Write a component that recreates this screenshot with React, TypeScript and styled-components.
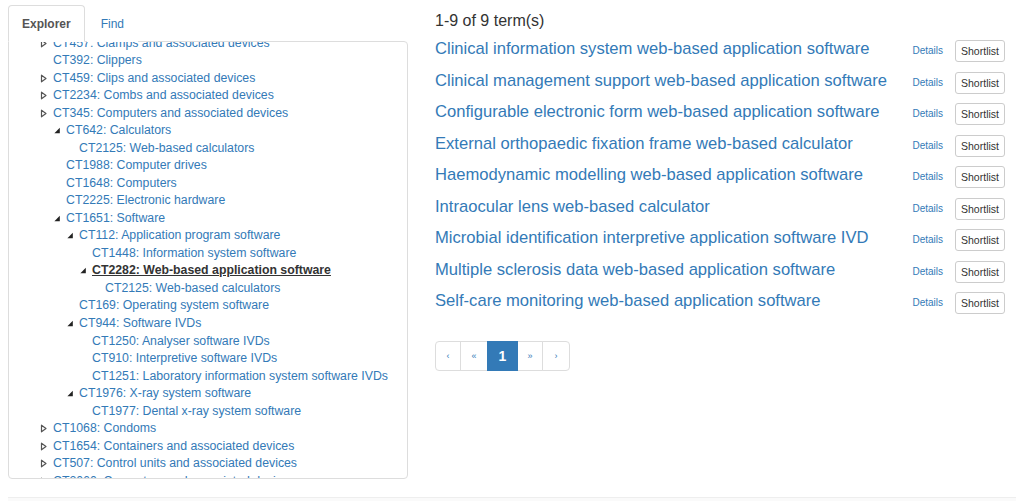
import React from "react";
import styled, { createGlobalStyle } from "styled-components";

const GlobalStyle = createGlobalStyle`
  html, body { margin: 0; padding: 0; background: #fff; }
  body { font-family: "Liberation Sans", Arial, sans-serif; color: #333; }
  * { box-sizing: border-box; }
`;

type NodeState = "closed" | "open" | "leaf";
interface TreeNode {
  level: number;
  label: string;
  state: NodeState;
  selected?: boolean;
}

const tree: TreeNode[] = [
  { level: 0, label: "CT457: Clamps and associated devices", state: "closed" },
  { level: 0, label: "CT392: Clippers", state: "leaf" },
  { level: 0, label: "CT459: Clips and associated devices", state: "closed" },
  { level: 0, label: "CT2234: Combs and associated devices", state: "closed" },
  { level: 0, label: "CT345: Computers and associated devices", state: "closed" },
  { level: 1, label: "CT642: Calculators", state: "open" },
  { level: 2, label: "CT2125: Web-based calculators", state: "leaf" },
  { level: 1, label: "CT1988: Computer drives", state: "leaf" },
  { level: 1, label: "CT1648: Computers", state: "leaf" },
  { level: 1, label: "CT2225: Electronic hardware", state: "leaf" },
  { level: 1, label: "CT1651: Software", state: "open" },
  { level: 2, label: "CT112: Application program software", state: "open" },
  { level: 3, label: "CT1448: Information system software", state: "leaf" },
  { level: 3, label: "CT2282: Web-based application software", state: "open", selected: true },
  { level: 4, label: "CT2125: Web-based calculators", state: "leaf" },
  { level: 2, label: "CT169: Operating system software", state: "leaf" },
  { level: 2, label: "CT944: Software IVDs", state: "open" },
  { level: 3, label: "CT1250: Analyser software IVDs", state: "leaf" },
  { level: 3, label: "CT910: Interpretive software IVDs", state: "leaf" },
  { level: 3, label: "CT1251: Laboratory information system software IVDs", state: "leaf" },
  { level: 2, label: "CT1976: X-ray system software", state: "open" },
  { level: 3, label: "CT1977: Dental x-ray system software", state: "leaf" },
  { level: 0, label: "CT1068: Condoms", state: "closed" },
  { level: 0, label: "CT1654: Containers and associated devices", state: "closed" },
  { level: 0, label: "CT507: Control units and associated devices", state: "closed" },
  { level: 0, label: "CT2060: Converters and associated devices", state: "closed" },
];

const results = [
  "Clinical information system web-based application software",
  "Clinical management support web-based application software",
  "Configurable electronic form web-based application software",
  "External orthopaedic fixation frame web-based calculator",
  "Haemodynamic modelling web-based application software",
  "Intraocular lens web-based calculator",
  "Microbial identification interpretive application software IVD",
  "Multiple sclerosis data web-based application software",
  "Self-care monitoring web-based application software",
];

const Page = styled.div`
  display: flex;
  flex-direction: column;
  min-height: 501px;
`;

const Main = styled.div`
  display: flex;
  padding: 5px 19px 0 8px;
  gap: 27px;
`;

const LeftCol = styled.div`
  width: 400px;
  flex: none;
  display: flex;
  flex-direction: column;
`;

const Tabs = styled.div`
  display: flex;
  height: 37px;
  position: relative;
  z-index: 1;
`;

const Tab = styled.div<{ $active?: boolean }>`
  height: 37px;
  padding: 0 13px;
  display: flex;
  align-items: center;
  font-size: 12px;
  font-weight: ${(p) => (p.$active ? 700 : 400)};
  color: ${(p) => (p.$active ? "#555" : "#337ab7")};
  background: #fff;
  border: 1px solid ${(p) => (p.$active ? "#ddd" : "transparent")};
  border-bottom-color: ${(p) => (p.$active ? "#fff" : "transparent")};
  border-radius: 4px 4px 0 0;
  margin-bottom: -1px;
  margin-right: 2px;
`;

const TreePanel = styled.div`
  height: 438px;
  border: 1px solid #ddd;
  border-radius: 0 4px 4px 4px;
  overflow: hidden;
  margin-top: -1px;
`;

const TreeList = styled.ul`
  list-style: none;
  margin: -7.5px 0 0 0;
  padding: 0 0 0 31px;
`;

const TreeRow = styled.li<{ $level: number }>`
  display: flex;
  align-items: center;
  height: 17.53px;
  padding-left: ${(p) => p.$level * 13}px;
  white-space: nowrap;
`;

const IconCell = styled.span`
  width: 13px;
  height: 17px;
  flex: none;
  display: flex;
  align-items: center;
`;

const TreeLink = styled.a<{ $selected?: boolean }>`
  font-size: 12.3px;
  line-height: 17px;
  color: ${(p) => (p.$selected ? "#333" : "#337ab7")};
  font-weight: ${(p) => (p.$selected ? 700 : 400)};
  text-decoration: ${(p) => (p.$selected ? "underline" : "none")};
  cursor: pointer;
`;

const RightCol = styled.div`
  flex: 1;
  display: flex;
  flex-direction: column;
`;

const Count = styled.div`
  font-size: 16px;
  line-height: 20px;
  color: #333;
  margin-top: 6px;
  margin-bottom: 7px;
`;

const ResultRow = styled.div`
  display: flex;
  align-items: flex-start;
  height: 31.5px;
`;

const ResultTitle = styled.a`
  flex: 1;
  font-size: 16.6px;
  line-height: 21px;
  color: #337ab7;
  text-decoration: none;
  cursor: pointer;
`;

const DetailsLink = styled.a`
  font-size: 10px;
  color: #337ab7;
  margin-top: 7px;
  margin-right: 12px;
  cursor: pointer;
`;

const ShortlistButton = styled.button`
  margin-top: 2px;
  height: 22px;
  width: 50px;
  padding: 0;
  font-family: "Liberation Sans", Arial, sans-serif;
  font-size: 10.5px;
  color: #333;
  background: #fff;
  border: 1px solid #ccc;
  border-radius: 3px;
`;

const Pager = styled.ul`
  list-style: none;
  display: flex;
  margin: 19.5px 0 0 0;
  padding: 0;
`;

const PageItem = styled.li<{ $w: number; $active?: boolean }>`
  width: ${(p) => p.$w}px;
  height: 30px;
  display: flex;
  align-items: center;
  justify-content: center;
  margin-left: -1px;
  border: 1px solid ${(p) => (p.$active ? "#337ab7" : "#ddd")};
  background: ${(p) => (p.$active ? "#337ab7" : "#fff")};
  color: ${(p) => (p.$active ? "#fff" : "#337ab7")};
  font-size: ${(p) => (p.$active ? "14px" : "9px")};
  font-weight: ${(p) => (p.$active ? 700 : 400)};
  position: relative;
  z-index: ${(p) => (p.$active ? 2 : 1)};
  &:first-child {
    margin-left: 0;
    border-radius: 4px 0 0 4px;
  }
  &:last-child {
    border-radius: 0 4px 4px 0;
  }
`;

const Footer = styled.div`
  margin: auto 8px 0 8px;
  height: 4px;
  border-top: 1px solid #eee;
  background: #fafafa;
`;

const Spacer = styled.div`
  height: 14px;
`;

function TreeIcon({ state }: { state: NodeState }) {
  if (state === "closed") {
    return (
      <svg width="13" height="17" viewBox="0 0 13 17">
        <path d="M1.5 5.2 L6 8.5 L1.5 11.8 Z" fill="none" stroke="#555" strokeWidth="1.2" strokeLinejoin="round" />
      </svg>
    );
  }
  if (state === "open") {
    return (
      <svg width="13" height="17" viewBox="0 0 13 17">
        <path d="M6.8 5.8 L6.8 11.2 L1.4 11.2 Z" fill="#222" />
      </svg>
    );
  }
  return null;
}

export default function App() {
  const pages = [
    { label: "‹", w: 26 },
    { label: "«", w: 28 },
    { label: "1", w: 31, active: true },
    { label: "»", w: 26 },
    { label: "›", w: 28 },
  ];
  return (
    <>
      <GlobalStyle />
      <Page>
        <Main>
          <LeftCol>
            <Tabs>
              <Tab $active>Explorer</Tab>
              <Tab>Find</Tab>
            </Tabs>
            <TreePanel>
              <TreeList>
                {tree.map((n, i) => (
                  <TreeRow key={i} $level={n.level}>
                    <IconCell>
                      <TreeIcon state={n.state} />
                    </IconCell>
                    <TreeLink $selected={n.selected}>{n.label}</TreeLink>
                  </TreeRow>
                ))}
              </TreeList>
            </TreePanel>
          </LeftCol>
          <RightCol>
            <Count>1-9 of 9 term(s)</Count>
            {results.map((r) => (
              <ResultRow key={r}>
                <ResultTitle>{r}</ResultTitle>
                <DetailsLink>Details</DetailsLink>
                <ShortlistButton>Shortlist</ShortlistButton>
              </ResultRow>
            ))}
            <Pager>
              {pages.map((p) => (
                <PageItem key={p.label} $w={p.w} $active={p.active}>
                  {p.label}
                </PageItem>
              ))}
            </Pager>
          </RightCol>
        </Main>
        <Spacer />
        <Footer />
      </Page>
    </>
  );
}
